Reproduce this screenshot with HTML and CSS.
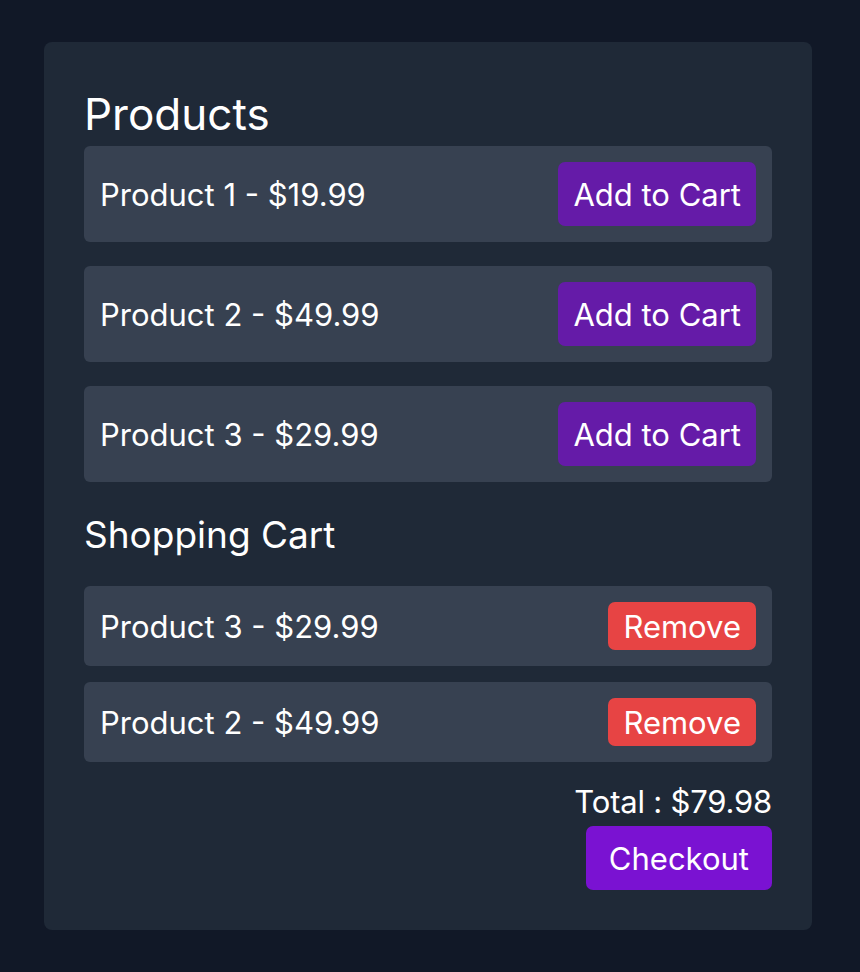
FILE: index.html
```html
<!DOCTYPE html>
<html lang="en">
<head>
<meta charset="utf-8">
<title>Shop</title>
<link rel="stylesheet" href="styles.css">
</head>
<body>
  <main class="card">
    <h1 class="title">Products</h1>
    <ul class="list products">
      <li class="row product-row"><span class="label">Product 1 - $19.99</span><button class="btn btn-add">Add to Cart</button></li>
      <li class="row product-row"><span class="label">Product 2 - $49.99</span><button class="btn btn-add">Add to Cart</button></li>
      <li class="row product-row"><span class="label">Product 3 - $29.99</span><button class="btn btn-add">Add to Cart</button></li>
    </ul>
    <h2 class="subtitle">Shopping Cart</h2>
    <ul class="list cart">
      <li class="row cart-row"><span class="label">Product 3 - $29.99</span><button class="btn btn-remove">Remove</button></li>
      <li class="row cart-row"><span class="label">Product 2 - $49.99</span><button class="btn btn-remove">Remove</button></li>
    </ul>
    <div class="summary">
      <p class="total">Total : $79.98</p>
      <button class="btn btn-checkout">Checkout</button>
    </div>
  </main>
</body>
</html>
```
FILE: styles.css
```css
html, body {
  margin: 0;
  padding: 0;
}
body {
  background: #111827;
  color: #ffffff;
  font-family: Inter, "Noto Sans", "Liberation Sans", sans-serif;
  min-height: 972px;
}
.card {
  box-sizing: border-box;
  width: 768px;
  margin: 42px 0 0 44px;
  padding: 40px;
  background: #1f2937;
  border-radius: 8px;
}
.title {
  margin: 0;
  font-size: 44px;
  font-weight: 400;
  line-height: 64px;
}
.list {
  list-style: none;
  margin: 0;
  padding: 0;
  display: flex;
  flex-direction: column;
}
.products { gap: 24px; }
.cart { gap: 16px; }
.row {
  display: flex;
  align-items: center;
  justify-content: space-between;
  background: #374151;
  border-radius: 6px;
  padding: 16px;
  font-size: 31px;
}
.label { line-height: 40px; padding-top: 1px; }
.subtitle {
  margin: 26px 0 24px;
  font-size: 37px;
  font-weight: 400;
  line-height: 54px;
}
.btn {
  border: 0;
  color: #ffffff;
  font-family: inherit;
  font-size: 31px;
  border-radius: 7px;
  padding: 0 15px;
  cursor: pointer;
}
.btn-add {
  height: 64px;
  background: #651ba8;
}
.btn-remove {
  height: 48px;
  background: #e74444;
}
.summary {
  display: flex;
  flex-direction: column;
  align-items: flex-end;
}
.total {
  margin: 15px 0 0;
  font-size: 31px;
  line-height: 49px;
  letter-spacing: -0.2px;
}
.btn-checkout {
  height: 64px;
  padding: 0 23px;
  background: #7a12d2;
}
```
